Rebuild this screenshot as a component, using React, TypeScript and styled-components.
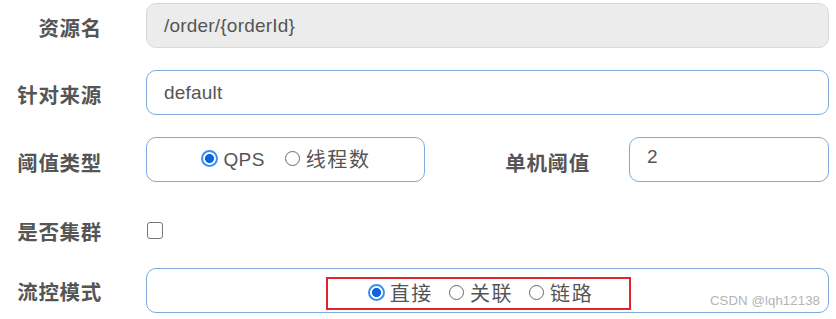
import React from "react";
import styled, { createGlobalStyle } from "styled-components";

const Global = createGlobalStyle`
  html, body { margin: 0; padding: 0; background: #fff; }
  body { font-family: "Liberation Sans", "Noto Sans CJK SC", sans-serif; }
`;

const Page = styled.div`
  position: relative;
  width: 836px;
  height: 319px;
  overflow: hidden;
  padding-right: 7px;
  box-sizing: border-box;
`;

const Row = styled.div<{ $top: number; $h?: number }>`
  display: grid;
  grid-template-columns: 101px 1fr;
  column-gap: 45px;
  align-items: center;
  margin-top: ${(p) => p.$top}px;
  height: ${(p) => p.$h ?? 45}px;
`;

const Label = styled.div<{ $dy?: number }>`
  text-align: right;
  font-family: "Noto Sans CJK SC", sans-serif;
  font-weight: 700;
  font-size: 20.5px;
  letter-spacing: 0.7px;
  color: #555;
  line-height: 1;
  margin-right: -1px;
  padding-top: ${(p) => p.$dy ?? 4}px;
  white-space: nowrap;
`;

const Field = styled.div<{ $disabled?: boolean }>`
  box-sizing: border-box;
  height: 45px;
  border-radius: 10px;
  border: 1.5px solid ${(p) => (p.$disabled ? "#d9d9d9" : "#7fa9d8")};
  background: ${(p) => (p.$disabled ? "#ececec" : "#fff")};
  display: flex;
  align-items: center;
  padding: 0 16px 0 17px;
  font-size: 19px;
  letter-spacing: 0.2px;
  color: #555;
`;

const TopText = styled.span`
  margin-top: -5px;
`;

const ThresholdGrid = styled.div`
  display: grid;
  grid-template-columns: 279px 1fr 200px;
  align-items: center;
`;

const SideLabel = styled(Label)`
  padding-right: 40px;
  padding-top: 5px;
`;

const RadioGroup = styled.div<{ $gap: number }>`
  display: flex;
  align-items: center;
  justify-content: center;
  gap: ${(p) => p.$gap}px;
`;

const ModeField = styled(Field)`
  justify-content: center;
  padding: 0;
`;

const Highlight = styled.div`
  display: flex;
  justify-content: center;
  align-items: center;
  box-sizing: border-box;
  width: 305px;
  height: 33px;
  margin-top: 6px;
  margin-left: -18px;
  border: 2.5px solid #e0242c;
  padding-left: 4px;
`;

const RadioItem = styled.label<{ $cjk?: boolean }>`
  display: inline-flex;
  align-items: center;
  gap: 3px;
  font-family: "Liberation Sans", "Noto Sans CJK SC", sans-serif;
  font-size: ${(p) => (p.$cjk ? 20 : 19)}px;
  letter-spacing: ${(p) => (p.$cjk ? 1.6 : 0.4)}px;
  color: #555;
  line-height: 1;
`;

const Dot = styled.span<{ $on?: boolean }>`
  box-sizing: border-box;
  width: ${(p) => (p.$on ? 17 : 15)}px;
  height: ${(p) => (p.$on ? 17 : 15)}px;
  border-radius: 50%;
  flex: none;
  border: ${(p) => (p.$on ? "2px solid #3d8ef0" : "1.2px solid #6a6a6a")};
  background: ${(p) =>
    p.$on ? "radial-gradient(circle, #0b63e5 0 4.2px, #fff 4.8px)" : "#fff"};
  margin-right: ${(p) => (p.$on ? 2 : 3)}px;
  margin-top: -2px;
`;

const Check = styled.span`
  box-sizing: border-box;
  display: block;
  width: 16px;
  height: 17px;
  border: 1.5px solid #777;
  border-radius: 3px;
  margin-left: 1px;
`;

const Watermark = styled.div`
  position: absolute;
  right: 16px;
  bottom: 11px;
  font-family: "Liberation Sans", sans-serif;
  font-size: 13.2px;
  color: #b4b4b4;
  letter-spacing: 0.1px;
`;

const Radio = ({
  on,
  cjk,
  children,
}: {
  on?: boolean;
  cjk?: boolean;
  children: React.ReactNode;
}) => (
  <RadioItem $cjk={cjk}>
    <Dot $on={on} />
    {children}
  </RadioItem>
);

export default function App() {
  return (
    <>
      <Global />
      <Page>
        <Row $top={3}>
          <Label>资源名</Label>
          <Field $disabled>/order/{"{orderId}"}</Field>
        </Row>
        <Row $top={22}>
          <Label>针对来源</Label>
          <Field>default</Field>
        </Row>
        <Row $top={22}>
          <Label $dy={6}>阈值类型</Label>
          <ThresholdGrid>
            <Field>
              <RadioGroup $gap={20} style={{ flex: 1 }}>
                <Radio on>QPS</Radio>
                <Radio cjk>线程数</Radio>
              </RadioGroup>
            </Field>
            <SideLabel>单机阈值</SideLabel>
            <Field>
              <TopText>2</TopText>
            </Field>
          </ThresholdGrid>
        </Row>
        <Row $top={29} $h={38}>
          <Label $dy={2}>是否集群</Label>
          <Check />
        </Row>
        <Row $top={19}>
          <Label $dy={2}>流控模式</Label>
          <ModeField>
            <Highlight>
              <RadioGroup $gap={16}>
                <Radio on cjk>直接</Radio>
                <Radio cjk>关联</Radio>
                <Radio cjk>链路</Radio>
              </RadioGroup>
            </Highlight>
          </ModeField>
        </Row>
        <Watermark>CSDN @lqh12138</Watermark>
      </Page>
    </>
  );
}
